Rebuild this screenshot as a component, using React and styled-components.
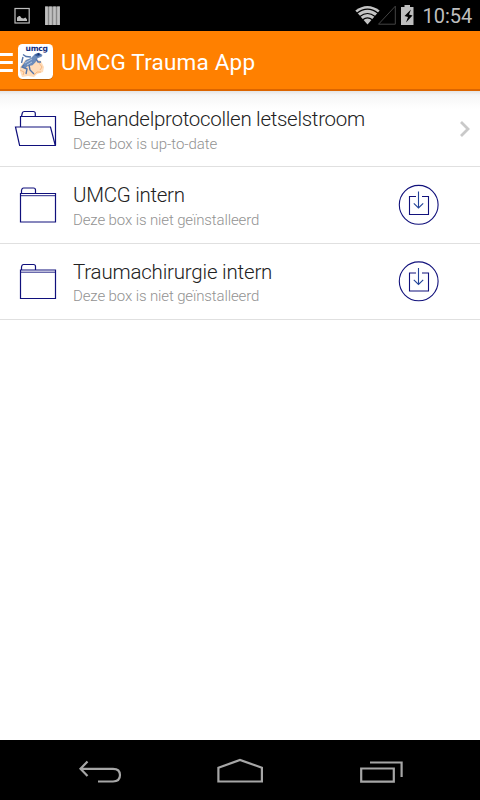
import React from "react";
import styled, { createGlobalStyle } from "styled-components";

const GlobalStyle = createGlobalStyle`
    body {
        margin: 0;
        background: #fff;
        font-family: Roboto, "Liberation Sans", sans-serif;
    }
    svg {
        display: block;
        flex: none;
    }
`;

const Screen = styled.div`
    display: flex;
    flex-direction: column;
    width: 480px;
    height: 800px;
    overflow: hidden;
    background: #fff;
`;

const StatusBar = styled.div`
    display: flex;
    align-items: center;
    justify-content: space-between;
    flex: none;
    height: 31px;
    background: #000;
`;

const Clock = styled.span`
    width: 50px;
    margin-left: 6.5px;
    margin-right: 7.5px;
    padding-top: 2px;
    color: #bebebe;
    font-size: 20px;
    line-height: 31px;
    white-space: nowrap;
`;

const StatusGroup = styled.div`
    display: flex;
    align-items: center;
    height: 31px;
`;

const ActionBar = styled.header`
    display: flex;
    align-items: center;
    flex: none;
    box-sizing: border-box;
    height: 60px;
    background: #ff8000;
    border-bottom: 2px solid #dc6500;
`;

const AppTitle = styled.h1`
    margin: 0 0 0 6px;
    padding-top: 3px;
    color: #fff;
    font-size: 22.5px;
    font-weight: 400;
    letter-spacing: 0.2px;
    line-height: 30px;
    white-space: nowrap;
`;

const BoxList = styled.main`
    flex: 1;
    background: linear-gradient(#e4e4e4, #f6f6f6 4px, #fff 18px);
    background-repeat: no-repeat;
`;

const Row = styled.div`
    display: flex;
    box-sizing: border-box;
    height: ${(p) => p.$height}px;
    border-bottom: 1px solid #e0e0e0;
`;

const RowText = styled.div`
    flex: 1;
    padding-top: 15px;
    white-space: nowrap;
`;

const RowTitle = styled.div`
    color: #222;
    font-size: 20.5px;
    font-weight: 300;
    letter-spacing: ${(p) => p.$spacing}px;
    line-height: 26px;
`;

const RowSubtitle = styled.div`
    color: #929292;
    font-size: 15px;
    font-weight: 300;
    letter-spacing: ${(p) => p.$spacing}px;
    line-height: ${(p) => p.$lineHeight || 24}px;
`;

const NavBar = styled.nav`
    flex: none;
    height: 60px;
    background: #000;
`;

function Notifications() {
    return (
        <svg width="70" height="31" fill="none">
            <rect x="15" y="8.5" width="14.2" height="14.5" stroke="#bebebe" strokeWidth="1.2" />
            <path d="M17 21v-3.500l2-1.500 1 0 1.500 2 2 .5 2-1 1.500 2V21z" fill="#bebebe" />
            <path d="M45 6.500h15V25H45z" fill="#858585" />
            <path d="M46.500 6.500V25M50.500 6.500V25M54.500 6.500V25M58.500 6.500V25" stroke="#c0c0c0" strokeWidth="2.600" />
        </svg>
    );
}

function SystemIcons() {
    return (
        <svg width="62" height="31" fill="none">
            <path d="M1.300 10.500Q13.500 1.500 25.700 10.500L13.500 24.500z" fill="#c4c4c4" />
            <path
                d="M3 13.200Q13.500 5.200 24 13.200M5.900 16.500Q13.500 10.500 21.100 16.500M8.700 19.700Q13.500 15.900 18.300 19.700"
                stroke="#000"
                strokeWidth="1.200"
            />
            <path d="M24.500 24.200L41.300 6.200V24.200z" stroke="#444" />
            <path d="M51.500 5h5.500v2h3.500v18h-12.500V7h3.500z" transform="translate(-1 0)" fill="#bebebe" />
            <path d="M57 9.500l-6.500 6.500 3.500 1-2 5.500 6.500-7-3.500-1z" fill="#000" />
        </svg>
    );
}

function DrawerIcon() {
    return (
        <svg width="13" height="58" fill="none">
            <path d="M0 23.500h12.800M0 31.500h12.800M0 39.500h12.800" stroke="#fff" strokeWidth="3" />
        </svg>
    );
}

function AppLogo() {
    return (
        <svg width="42" height="58" viewBox="13 31 42 58" fill="none">
            <rect x="18.500" y="45" width="34.500" height="35" rx="5" fill="#8f4a08" opacity="0.65" />
            <rect x="18" y="44" width="35" height="35" rx="4.500" fill="#fff" />
            <path
                d="M20 67l5-7 8-2 8 3 3 6-1 5-6 2-3 3-6-1-6 1-2-6z"
                fill="#ffdcba"
            />
            <path d="M20 70l4 2-1 3M34 75l3-3 4 0M39 63l3 4-2 3" stroke="#f6b882" />
            {/* frog */}
            <path
                d="M22 66l4-6 5-2 4-4 4-1.300 3.500 2.300-1 1.700-4 1.600-2 4-3 3-5 1-2 2z"
                fill="#6c8cbb"
            />
            <path d="M34.500 55l3.500-2 3.500 1.800-4 2z" fill="#3a5f9e" />
            <path
                d="M31 57l-5-.5-3-2M23 57l-1.500 6M24 65l-2 2 5 2-1 5M29 65l1 5 4 4M36 59l2 3h3"
                stroke="#5475ab"
                strokeWidth="1.400"
            />
            <path d="M25 63l7-4M27 65l5-3" stroke="#b9cbe2" strokeWidth="0.900" />
            <circle cx="38.500" cy="54.200" r="1" fill="#12306f" />
            <text
                x="25.500"
                y="51.400"
                fill="#172f80"
                fontFamily="DejaVu Sans, sans-serif"
                fontSize="7.600"
                fontWeight="700"
                textLength="22.500"
            >
                umcg
            </text>
        </svg>
    );
}

function FolderOpen() {
    return (
        <svg width="73" height="75" viewBox="0 91 73 75" fill="none" stroke="#10107c" strokeWidth="1.200">
            <path d="M21.500 116.500l.8-3.500q.4-1.500 2-1.500h9q2 0 2 2v3" />
            <path d="M20.500 127v-10.500h35v29" />
            <path d="M15.500 127h35l4.800 18.500H19.600z" />
        </svg>
    );
}

function FolderClosed({ viewTop }) {
    return (
        <svg width="73" height="75" viewBox={`0 ${viewTop} 73 75`} fill="none" stroke="#10107c" strokeWidth="1.200">
            <path d="M21.500 193.500v-3q.4-2.500 2-2.500h10q2 0 2 2v3.500" />
            <path d="M20.500 193.500h35v28.500h-35z" />
            <path d="M20.500 195.700h35" strokeWidth="0.900" />
        </svg>
    );
}

function DownloadButton({ viewTop }) {
    return (
        <svg width="90" height="75" viewBox={`390 ${viewTop} 90 75`} fill="none" stroke="#12127c" strokeWidth="1.100">
            <circle cx="418.700" cy="204.800" r="19.400" />
            <path d="M416 196.500h-6.500v18h19v-18H422" />
            <path d="M418.500 191.500V208M413.800 203.300l4.700 4.700 4.700-4.700" stroke="#244498" />
        </svg>
    );
}

function Chevron() {
    return (
        <svg width="90" height="75" viewBox="390 91 90 75" fill="none">
            <path d="M461 122l7 7-7 7" stroke="#c9c9c9" strokeWidth="2.800" />
        </svg>
    );
}

function NavIcons() {
    return (
        <svg width="480" height="60" viewBox="0 740 480 60" fill="none" stroke="#a6a6a6" strokeWidth="2.200">
            <path d="M87.500 761.500l-7 7.300 7 7.300M80.500 768.800H113q7 0 7 6.300 0 6.400-7 6.400H98" />
            <path d="M218.400 767.700L240 760l21.900 7.700v13.800h-43.500z" />
            <path d="M361.200 768.500h32.600v13.200h-32.600zM370 762.500h31.600V777" />
        </svg>
    );
}

export default function App() {
    return (
        <>
            <GlobalStyle />
            <Screen>
                <StatusBar>
                    <Notifications />
                    <StatusGroup>
                        <SystemIcons />
                        <Clock>10:54</Clock>
                    </StatusGroup>
                </StatusBar>
                <ActionBar>
                    <DrawerIcon />
                    <AppLogo />
                    <AppTitle>UMCG Trauma App</AppTitle>
                </ActionBar>
                <BoxList>
                    <Row $height={76}>
                        <FolderOpen />
                        <RowText>
                            <RowTitle $spacing={-0.29}>Behandelprotocollen letselstroom</RowTitle>
                            <RowSubtitle $spacing={-0.06}>Deze box is up-to-date</RowSubtitle>
                        </RowText>
                        <Chevron />
                    </Row>
                    <Row $height={77}>
                        <FolderClosed viewTop={167} />
                        <RowText>
                            <RowTitle $spacing={-0.28}>UMCG intern</RowTitle>
                            <RowSubtitle $spacing={-0.12}>Deze box is niet geïnstalleerd</RowSubtitle>
                        </RowText>
                        <DownloadButton viewTop={167} />
                    </Row>
                    <Row $height={76}>
                        <FolderClosed viewTop={167.5} />
                        <RowText>
                            <RowTitle $spacing={-0.2}>Traumachirurgie intern</RowTitle>
                            <RowSubtitle $spacing={-0.12} $lineHeight={22}>
                                Deze box is niet geïnstalleerd
                            </RowSubtitle>
                        </RowText>
                        <DownloadButton viewTop={167.5} />
                    </Row>
                </BoxList>
                <NavBar>
                    <NavIcons />
                </NavBar>
            </Screen>
        </>
    );
}
